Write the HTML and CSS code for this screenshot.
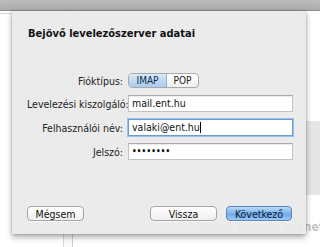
FILE: index.html
```html
<!DOCTYPE html>
<html lang="hu">
  <head>
    <meta charset="UTF-8" />
    <title>Bejövő levelezőszerver adatai</title>
    <link rel="stylesheet" href="styles.css">
  </head>
  <body>
    <div class="toolbar"></div>
    <div class="mail-window">
      <div class="mailbox-pane"></div>
      <div class="list-pane"></div>
      <div class="message-pane">
        <div class="watermark"></div>
        <div class="empty-note">(Nincs kijelölt üzenet)</div>
      </div>
    </div>

    <!-- account setup sheet -->
    <div class="sheet">
      <h1 class="sheet-title">Bejövő levelezőszerver adatai</h1>
      <div class="form">
        <label class="form-label">Fióktípus:</label>
        <div class="segmented">
          <span class="segment active">IMAP</span>
          <span class="segment">POP</span>
        </div>
        <label class="form-label">Levelezési kiszolgáló:</label>
        <div class="field">mail.ent.hu</div>
        <label class="form-label">Felhasználói név:</label>
        <div class="field focused">valaki@ent.hu<span class="caret"></span></div>
        <label class="form-label">Jelszó:</label>
        <div class="field password">••••••••</div>
      </div>
      <div class="sheet-buttons">
        <button class="btn">Mégsem</button>
        <span class="spacer"></span>
        <button class="btn btn-back">Vissza</button>
        <button class="btn btn-primary">Következő</button>
      </div>
    </div>
  </body>
</html>
```

FILE: styles.css
```css
* {
  margin: 0;
  padding: 0;
  box-sizing: border-box;
}

body {
  width: 320px;
  height: 247px;
  overflow: hidden;
  position: relative;
  background: #fff;
  font-family: 'DejaVu Sans Condensed', 'Liberation Sans', sans-serif;
  font-size: 10.5px;
  color: #222;
}

.toolbar {
  height: 11px;
  background: linear-gradient(#bdbdbd, #aaaaaa);
  border-bottom: 1px solid #8e8e8e;
}

/* Mail window behind the sheet */
.mail-window {
  display: flex;
  height: 236px;
}

.mailbox-pane {
  width: 64px;
  border-top: 1px solid #d6d6d6;
  margin-top: 2px;
  border-right: 1px solid #d9d9d9;
}

.list-pane {
  width: 9px;
  border-right: 1px solid #cfcfcf;
  background: #fafafa;
}

.message-pane {
  flex: 1;
  position: relative;
  overflow: hidden;
}

.watermark {
  position: absolute;
  right: 0;
  top: 110px;
  width: 24px;
  height: 74px;
  background: #e6e6e6;
}

.empty-note {
  position: absolute;
  left: 122px;
  top: 209px;
  white-space: nowrap;
  font-weight: bold;
  font-size: 12px;
  color: #c4c4c4;
}

/* Sheet */
.sheet {
  position: absolute;
  left: 12px;
  top: 11px;
  width: 294px;
  height: 223px;
  background: rgba(234, 234, 234, 0.94);
  box-shadow: 0 3px 6px rgba(0, 0, 0, 0.35), 0 0 2px rgba(0, 0, 0, 0.2);
  display: flex;
  flex-direction: column;
  padding: 16px 14px 13px 15px;
}

.sheet-title {
  font-size: 11px;
  font-weight: bold;
  line-height: 14px;
  color: #111;
  padding-left: 1px;
}

.form {
  display: grid;
  grid-template-columns: 96px 165px;
  column-gap: 5px;
  row-gap: 7px;
  align-items: center;
  margin-top: 32px;
}

.form-label {
  text-align: right;
  white-space: nowrap;
  color: #222;
}

.segmented {
  display: flex;
  width: 71px;
  height: 15px;
  border: 1px solid #a9a9a9;
  border-radius: 4px;
  overflow: hidden;
  background: linear-gradient(#ffffff, #f0f0f0);
}

.segment {
  flex: 1;
  text-align: center;
  line-height: 13px;
  font-size: 10px;
}

.segment.active {
  flex: 0 0 38px;
  background: linear-gradient(#d9e8f6, #a9cbec);
  color: #0c2a50;
  border-right: 1px solid #9bb0c8;
}

.field {
  height: 17px;
  background: #fff;
  border: 1px solid #c2c2c2;
  border-top-color: #a9a9a9;
  box-shadow: inset 0 1px 1px rgba(0, 0, 0, 0.08);
  padding-left: 3px;
  line-height: 15px;
  color: #111;
  white-space: nowrap;
}

.field.focused {
  border-color: #6b9bd6;
  box-shadow: 0 0 0 1px #9cc1ea;
}

.caret {
  display: inline-block;
  width: 1px;
  height: 11px;
  background: #000;
  vertical-align: -2px;
}

.field.password {
  font-size: 8px;
  letter-spacing: 0.2px;
  font-weight: bold;
}

.sheet-buttons {
  display: flex;
  margin-top: auto;
  gap: 9px;
}

.spacer {
  flex: 1;
}

.btn {
  height: 15px;
  font-family: inherit;
  font-size: 10.5px;
  color: #111;
  border: 1px solid #a5a5a5;
  border-radius: 4px;
  background: linear-gradient(#ffffff, #efefef);
  box-shadow: 0 1px 0 rgba(255, 255, 255, 0.6);
  width: 57px;
}

.btn-back {
  width: 67px;
}

.btn-primary {
  width: 66px;
  border-color: #5a86bd;
  background: linear-gradient(#bcdaf7, #79b3ee 50%, #69a7ea 51%, #9ccaf5);
  color: #0a1a30;
}
```
